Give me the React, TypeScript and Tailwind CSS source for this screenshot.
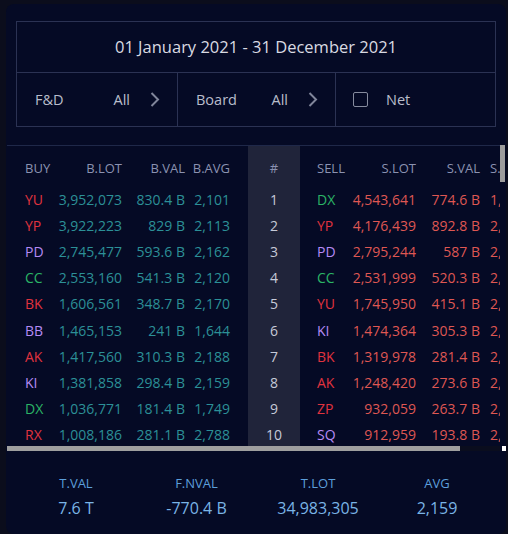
import React from "react";

type Row = {
  rank: number;
  buy: string;
  blot: string;
  bval: string;
  bavg: string;
  sell: string;
  slot: string;
  sval: string;
  savg: string;
};

const rows: Row[] = [
  { rank: 1, buy: "YU", blot: "3,952,073", bval: "830.4 B", bavg: "2,101", sell: "DX", slot: "4,543,641", sval: "774.6 B", savg: "1,705" },
  { rank: 2, buy: "YP", blot: "3,922,223", bval: "829 B", bavg: "2,113", sell: "YP", slot: "4,176,439", sval: "892.8 B", savg: "2,138" },
  { rank: 3, buy: "PD", blot: "2,745,477", bval: "593.6 B", bavg: "2,162", sell: "PD", slot: "2,795,244", sval: "587 B", savg: "2,100" },
  { rank: 4, buy: "CC", blot: "2,553,160", bval: "541.3 B", bavg: "2,120", sell: "CC", slot: "2,531,999", sval: "520.3 B", savg: "2,055" },
  { rank: 5, buy: "BK", blot: "1,606,561", bval: "348.7 B", bavg: "2,170", sell: "YU", slot: "1,745,950", sval: "415.1 B", savg: "2,378" },
  { rank: 6, buy: "BB", blot: "1,465,153", bval: "241 B", bavg: "1,644", sell: "KI", slot: "1,474,364", sval: "305.3 B", savg: "2,071" },
  { rank: 7, buy: "AK", blot: "1,417,560", bval: "310.3 B", bavg: "2,188", sell: "BK", slot: "1,319,978", sval: "281.4 B", savg: "2,132" },
  { rank: 8, buy: "KI", blot: "1,381,858", bval: "298.4 B", bavg: "2,159", sell: "AK", slot: "1,248,420", sval: "273.6 B", savg: "2,192" },
  { rank: 9, buy: "DX", blot: "1,036,771", bval: "181.4 B", bavg: "1,749", sell: "ZP", slot: "932,059", sval: "263.7 B", savg: "2,829" },
  { rank: 10, buy: "RX", blot: "1,008,186", bval: "281.1 B", bavg: "2,788", sell: "SQ", slot: "912,959", sval: "193.8 B", savg: "2,123" },
];

// broker type colours
const codeColor: Record<string, string> = {
  YU: "text-[#e0333f]",
  YP: "text-[#e0333f]",
  BK: "text-[#e0333f]",
  AK: "text-[#e0333f]",
  RX: "text-[#e0333f]",
  ZP: "text-[#e0333f]",
  PD: "text-[#b58af5]",
  BB: "text-[#b58af5]",
  KI: "text-[#b58af5]",
  SQ: "text-[#b58af5]",
  CC: "text-[#2bb466]",
  DX: "text-[#2bb466]",
};

function Chevron() {
  return (
    <svg width="10" height="15" viewBox="0 0 10 15" fill="none">
      <polyline points="1.5,1 8,7.5 1.5,14" stroke="#80859a" strokeWidth="2" />
    </svg>
  );
}

function Filter({ label, value, last }: { label: string; value: string; last?: boolean }) {
  return (
    <div className={`flex items-center pl-[18px] pr-[17px] ${last ? "" : "border-r border-[#2b3253]"}`}>
      <span className="text-[#b9bdcb]">{label}</span>
      <span className="ml-auto text-[#b9bdcb]">{value}</span>
      <span className="ml-[20px] flex items-center">
        <Chevron />
      </span>
    </div>
  );
}

function Stat({ label, value }: { label: string; value: string }) {
  return (
    <div className="flex flex-col items-center">
      <span className="text-[13px] leading-[18px] text-[#5c9fdb]">{label}</span>
      <span className="mt-[5px] text-[16px] leading-[22px] text-[#7ab4e6]">{value}</span>
    </div>
  );
}

export default function App() {
  return (
    <div
      className="h-[534px] w-[508px] overflow-hidden bg-[#0b0d1c] pl-[6px] pr-[2px] pt-[4px]"
      style={{ fontFamily: '"Open Sans", "Noto Sans", sans-serif' }}
    >
      <div className="h-[530px] overflow-hidden rounded-lg bg-[#050a25] pt-[17px]">
        <div className="mx-[10px] border border-[#2b3253]">
          <div className="flex h-[51px] items-center justify-center border-b border-[#2b3253] text-[16.5px] text-[#d9dae2]">
            01 January 2021 - 31 December 2021
          </div>
          <div className="grid h-[53px] grid-cols-[161px_158px_1fr] text-[14.5px]">
            <Filter label="F&D" value="All" />
            <Filter label="Board" value="All" />
            <div className="flex items-center pl-[17px]">
              <span className="h-[15px] w-[15px] rounded-[2px] border-[1.5px] border-[#868b9e]" />
              <span className="ml-[18px] text-[#b9bdcb]">Net</span>
            </div>
          </div>
        </div>

        <div className="ml-[1px] mt-[18px] flex">
          <div className="h-[301px] w-[493px] overflow-hidden border-t border-[#1f2849] text-[14px]">
            <div className="flex h-[40px] items-stretch whitespace-nowrap text-[13px] text-[#8b92b1]">
              <span className="w-[48px] shrink-0 pl-[18px] pt-[13px]">BUY</span>
              <span className="w-[67px] shrink-0 pt-[13px] text-right">B.LOT</span>
              <span className="w-[63px] shrink-0 pt-[13px] text-right">B.VAL</span>
              <span className="w-[45px] shrink-0 pt-[13px] text-right">B.AVG</span>
              <span className="w-[18px] shrink-0" />
              <span className="w-[52px] shrink-0 bg-[#20243a] pt-[13px] text-center">#</span>
              <span className="w-[45px] shrink-0 pl-[17px] pt-[13px]">SELL</span>
              <span className="w-[71px] shrink-0 pt-[13px] text-right">S.LOT</span>
              <span className="w-[64px] shrink-0 pt-[13px] text-right">S.VAL</span>
              <span className="w-[60px] shrink-0 pl-[10px] pt-[13px]">S.AVG</span>
            </div>
            {rows.map((r) => (
              <div key={r.rank} className="flex h-[26.2px] items-center whitespace-nowrap">
                <span className={`w-[48px] shrink-0 pl-[18px] ${codeColor[r.buy]}`}>{r.buy}</span>
                <span className="w-[67px] shrink-0 text-right text-[#2c9097]">{r.blot}</span>
                <span className="w-[63px] shrink-0 text-right text-[#2c9097]">{r.bval}</span>
                <span className="w-[45px] shrink-0 text-right text-[#2c9097]">{r.bavg}</span>
                <span className="w-[18px] shrink-0" />
                <span className="flex h-full w-[52px] shrink-0 items-center justify-center bg-[#20243a] text-[#c6cad8]">
                  {r.rank}
                </span>
                <span className={`w-[45px] shrink-0 pl-[17px] ${codeColor[r.sell]}`}>{r.sell}</span>
                <span className="w-[71px] shrink-0 text-right text-[#df5753]">{r.slot}</span>
                <span className="w-[64px] shrink-0 text-right text-[#df5753]">{r.sval}</span>
                <span className="w-[60px] shrink-0 pl-[10px] text-[#df5753]">{r.savg}</span>
              </div>
            ))}
          </div>
          <div className="w-[6px]">
            <div className="h-[37px] w-[5px] bg-[#9d9d9d]" />
          </div>
        </div>

        <div className="ml-[1px] flex h-[5px]">
          <div className="w-[453px] bg-[#9f9f9f]" />
          <div className="w-[40px] bg-[#0a0d1e]" />
          <div className="ml-[2px] w-[4px] bg-white" />
        </div>

        <div className="ml-[8px] mt-[23px] grid grid-cols-[124px_117px_126px_112px]">
          <Stat label="T.VAL" value="7.6 T" />
          <Stat label="F.NVAL" value="-770.4 B" />
          <Stat label="T.LOT" value="34,983,305" />
          <Stat label="AVG" value="2,159" />
        </div>
      </div>
    </div>
  );
}
